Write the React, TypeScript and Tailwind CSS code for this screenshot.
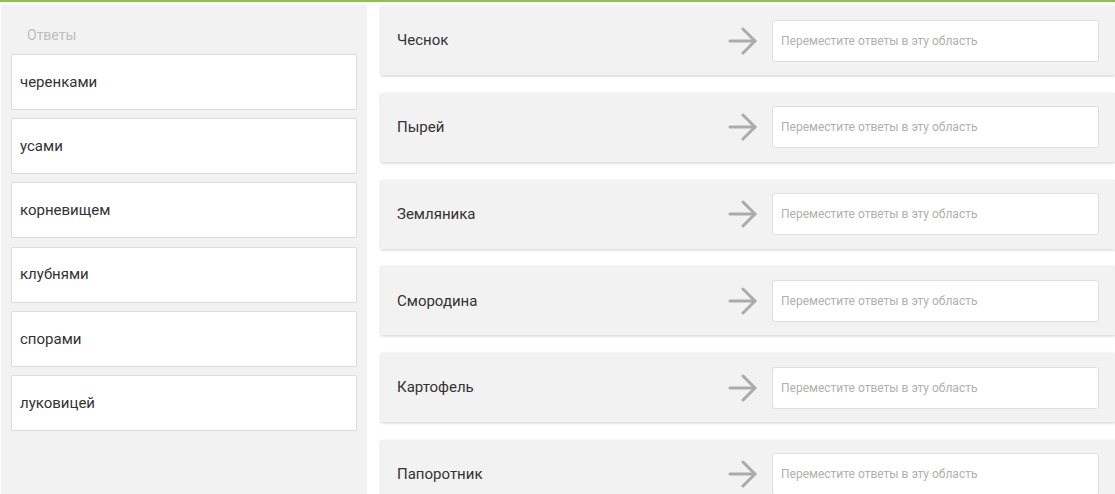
const answers = ['черенками', 'усами', 'корневищем', 'клубнями', 'спорами', 'луковицей'];
const plants = ['Чеснок', 'Пырей', 'Земляника', 'Смородина', 'Картофель', 'Папоротник'];

function Arrow() {
  return (
    <svg width="30" height="28" viewBox="0 0 30 28" fill="none" stroke="#ababab" strokeWidth="3" strokeLinecap="round" strokeLinejoin="round">
      <path d="M2 14h25" />
      <path d="M15 2l12 12-12 12" />
    </svg>
  );
}

export default function App() {
  return (
    <div className="h-[494px] w-[1115px] overflow-hidden bg-white font-['Roboto',sans-serif]">
      <div className="h-[2px] bg-[#8bc34a]" />
      <div className="flex gap-[15px] pl-[2px] pt-[4px]">
        <div className="h-[500px] w-[364px] shrink-0 bg-[#f2f2f2] px-[9px] shadow-[0_0_2px_rgba(0,0,0,0.15)]">
          <div className="flex h-[48px] items-center pl-[16px] pt-[10px] text-[14px] text-[#bdbdbd]">Ответы</div>
          <div className="flex flex-col gap-[8.2px]">
            {answers.map((a) => (
              <div
                key={a}
                className="flex h-[56px] items-center rounded-[2px] border border-[#dcdcdc] bg-white pl-[8px] text-[15px] text-[#333]"
              >
                {a}
              </div>
            ))}
          </div>
        </div>
        <div className="flex flex-1 flex-col gap-[17.8px]">
          {plants.map((p) => (
            <div
              key={p}
              className="flex h-[69px] shrink-0 items-center bg-[#f2f2f2] pl-[16px] pr-[16px] shadow-[0_1px_3px_rgba(0,0,0,0.2)]"
            >
              <div className="flex-1 text-[15px] text-[#333]">{p}</div>
              <div className="mr-[14px] flex items-center">
                <Arrow />
              </div>
              <div className="flex h-[42px] w-[327px] items-center rounded-[3px] border border-[#dedede] bg-white pl-[8px] text-[12px] text-[#b0b0b0]">
                Переместите ответы в эту область
              </div>
            </div>
          ))}
        </div>
      </div>
    </div>
  );
}
